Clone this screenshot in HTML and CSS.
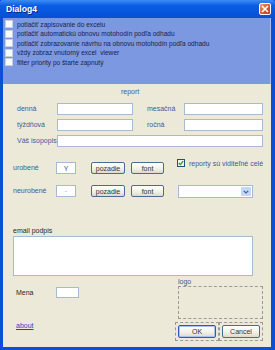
FILE: index.html
```html
<!DOCTYPE html>
<html lang="sk">
<head>
    <meta charset="UTF-8">
    <title>Dialog4</title>
    <link rel="stylesheet" href="styles.css">
</head>
<body>
    <div class="window">
        <div class="titlebar">
            <span class="title">Dialog4</span>
            <span class="close">
                <svg width="8" height="8" viewBox="0 0 8 8"><path d="M1 1L7 7M7 1L1 7" stroke="#fff" stroke-width="1.6"/></svg>
            </span>
        </div>
        <div class="content">
            <!-- volby nahore -->
            <div class="options">
                <label class="opt"><span class="box"></span>potlačiť zapisovanie do excelu</label>
                <label class="opt"><span class="box"></span>potlačiť automatickú obnovu motohodín podľa odhadu</label>
                <label class="opt"><span class="box"></span>potlačiť zobrazovanie návrhu na obnovu motohodín podľa odhadu</label>
                <label class="opt"><span class="box"></span>vždy zobraz vnutorný excel&nbsp; viewer</label>
                <label class="opt"><span class="box"></span>filter priority po štarte zapnutý</label>
            </div>

            <div class="report-title">report</div>
            <div class="report">
                <span class="lbl">denná</span><span class="input"></span>
                <span class="lbl lbl-right">mesačná</span><span class="input"></span>
                <span class="lbl">týždňová</span><span class="input"></span>
                <span class="lbl lbl-right">ročná</span><span class="input"></span>
                <span class="lbl">Váš isopopis</span><span class="input wide"></span>
            </div>

            <div class="colors">
                <span class="lbl">urobené</span>
                <span class="input small">Y</span>
                <span class="btn">pozadie</span>
                <span class="btn">font</span>
                <label class="check"><span class="box checked"><svg width="6" height="6" viewBox="0 0 6 6"><path d="M0.8 3L2.4 4.6L5.2 1.2" fill="none" stroke="#21a121" stroke-width="1.3"/></svg></span>reporty sú viditeľné celé</label>

                <span class="lbl">neurobené</span>
                <span class="input small">·</span>
                <span class="btn">pozadie</span>
                <span class="btn">font</span>
                <span class="combo"><span class="arrow"><svg width="6" height="4" viewBox="0 0 6 4"><path d="M0.8 0.8L3 3L5.2 0.8" fill="none" stroke="#4d6185" stroke-width="1.2"/></svg></span></span>
            </div>

            <div class="email">
                <div class="lbl dark">email podpis</div>
                <div class="textarea"></div>
            </div>

            <div class="bottom">
                <div class="left">
                    <div class="mena">
                        <span class="lbl dark">Mena</span>
                        <span class="input mena-input"></span>
                    </div>
                    <a class="about" href="#">about</a>
                </div>
                <div class="right">
                    <div class="lbl">logo</div>
                    <div class="logo"></div>
                    <div class="actions">
                        <span class="frame"><span class="btn ok">OK</span></span>
                        <span class="frame"><span class="btn">Cancel</span></span>
                    </div>
                </div>
            </div>
        </div>
    </div>
</body>
</html>
```

FILE: styles.css
```css
* {
    margin: 0;
    padding: 0;
    box-sizing: border-box;
}

body {
    font-family: "Liberation Sans", Arial, sans-serif;
    font-size: 7px;
    background: #ffffff;
}

.window {
    width: 275px;
    height: 350px;
    display: flex;
    flex-direction: column;
    background: #0b4fd6;
    padding: 0 4px 3px 3px;
}

/* titulok */
.titlebar {
    height: 18px;
    margin: 0 -4px 0 -3px;
    padding: 0 4px 0 6px;
    display: flex;
    align-items: center;
    justify-content: space-between;
    background: linear-gradient(#3d8df6, #0c5ee6 30%, #0655dc 70%, #0a4fcf);
    border-radius: 3px 3px 0 0;
}

.title {
    color: #ffffff;
    font-weight: bold;
    font-size: 8.6px;
    text-shadow: 1px 1px 0 #0a2a80;
}

.close {
    width: 12px;
    height: 12px;
    display: flex;
    align-items: center;
    justify-content: center;
    border: 1px solid #ffffff;
    border-radius: 2px;
    background: linear-gradient(135deg, #ef9a7a, #dc5a35 50%, #c23c1c);
}

.content {
    flex: 1;
    background: #ece9d8;
    display: flex;
    flex-direction: column;
}

.options {
    height: 66px;
    background: #7c98e0;
    padding-top: 1.5px;
    border-right: 1px solid #a9bdf0;
}

.opt {
    height: 9.5px;
    display: flex;
    align-items: center;
    padding-left: 2px;
    color: #1b1f4a;
    font-size: 6.6px;
}

.box {
    width: 8px;
    height: 8px;
    background: #fbfbfb;
    border: 1px solid #c9d0dc;
    margin-right: 4px;
    flex: none;
    display: flex;
    align-items: center;
    justify-content: center;
}

.lbl {
    color: #3d5c98;
    line-height: 12px;
    white-space: nowrap;
}

.dark {
    color: #2a2a2a;
}

.input {
    background: #ffffff;
    border: 1px solid #a8bad0;
    height: 12px;
    display: flex;
    align-items: center;
    justify-content: center;
    color: #555;
}

/* report */
.report-title {
    margin-top: 3px;
    padding-left: 118px;
    height: 10px;
    line-height: 10px;
    color: #3d5c98;
}

.report {
    margin-top: 6px;
    padding-left: 14px;
    display: grid;
    grid-template-columns: 40px 76px 14px 37px 79px;
    grid-auto-rows: 12px;
    row-gap: 4px;
}

.report .lbl-right {
    grid-column: 4;
}

.report .wide {
    grid-column: 2 / 6;
}

/* farby */
.colors {
    margin-top: 15px;
    padding-left: 10px;
    display: grid;
    grid-template-columns: 43px 20px 15px 34px 6px 33px 13px 80px;
    grid-template-rows: 12px 13px;
    row-gap: 11px;
}

.colors .lbl {
    grid-column: 1;
}

.colors .small {
    grid-column: 2;
}

.colors .btn {
    grid-column: 4;
}

.colors .btn + .btn {
    grid-column: 6;
}

.check {
    grid-column: 8;
    display: flex;
    align-items: center;
    align-self: start;
    margin-top: -3px;
    color: #3d5c98;
    white-space: nowrap;
}

.box.checked {
    border-color: #1c5180;
    background: #f4f4f0;
}

.combo {
    grid-column: 8;
    margin-left: 1px;
    width: 75px;
    height: 13px;
    background: #ffffff;
    border: 1px solid #a8bad0;
    display: flex;
    justify-content: flex-end;
    padding: 1px;
}

.arrow {
    width: 10px;
    background: #c6d6fa;
    border-radius: 1px;
    display: flex;
    align-items: center;
    justify-content: center;
}

.btn {
    height: 12px;
    display: flex;
    align-items: center;
    justify-content: center;
    border: 1px solid #4a6b96;
    border-radius: 2px;
    background: linear-gradient(#ffffff, #f1efe6 60%, #dcd8cc);
    color: #333;
}

/* email */
.email {
    margin-top: 28px;
    padding-left: 10px;
}

.email .lbl {
    line-height: 10px;
    height: 10px;
}

.textarea {
    width: 240px;
    height: 40px;
    background: #ffffff;
    border: 1px solid #a8bad0;
}

/* spodna cast */
.bottom {
    display: flex;
}

.left {
    width: 175px;
    padding-left: 13px;
}

.mena {
    margin-top: 11px;
    display: flex;
    align-items: center;
}

.mena .lbl {
    width: 40px;
    line-height: 11px;
}

.mena-input {
    width: 23px;
    height: 11px;
}

.about {
    display: block;
    width: max-content;
    margin-top: 23px;
    color: #2f3fc4;
    line-height: 10px;
}

.right {
    width: 85px;
}

.right .lbl {
    margin-top: 1px;
    line-height: 9px;
}

.logo {
    height: 33px;
    border: 1px dashed #9a9a9a;
}

.actions {
    margin: 3px 0 0 -3px;
    display: flex;
}

.frame {
    width: 45px;
    height: 19px;
    border: 1px dashed #9a9a9a;
    padding: 2px;
}

.frame .btn {
    height: 13px;
}

.btn.ok {
    border-color: #2c5bb8;
    box-shadow: inset 0 0 0 1px #a6c1f2;
}
```
